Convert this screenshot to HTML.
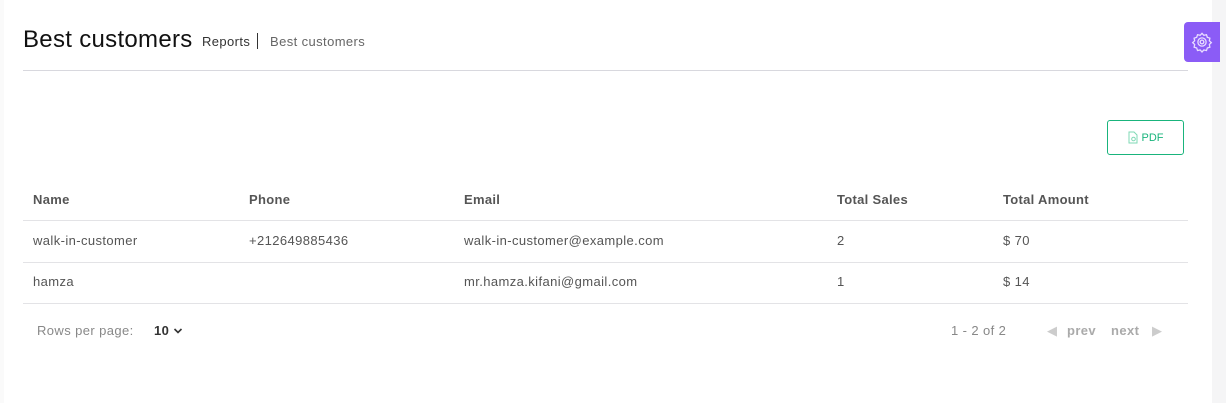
<!DOCTYPE html>
<html><head><meta charset="utf-8"><style>
*{margin:0;padding:0;box-sizing:border-box}
body{width:1226px;height:403px;background:#fff;font-family:"Liberation Sans",sans-serif;position:relative;overflow:hidden;color:#444}
.strip{position:absolute;right:0;top:0;width:14px;height:403px;background:#f5f5f6}
.lb{position:absolute;left:0;top:0;width:4px;height:403px;background:#fafafa}
h1{position:absolute;left:23px;top:26px;font-size:24px;font-weight:normal;color:#111;letter-spacing:0.3px}
.bc{position:absolute;top:34px;font-size:13px;letter-spacing:0.4px}
.hr{position:absolute;left:23px;top:70px;width:1165px;height:1px;background:#d8d8de}
.gear{position:absolute;left:1184px;top:22px;width:36px;height:40px;background:#8b5cf6;border-radius:4px 0 0 4px;display:flex;align-items:center;justify-content:center}
.pdf{position:absolute;left:1107px;top:120px;width:77px;height:35px;border:1px solid #19b47c;border-radius:3px;color:#19b47c;font-size:11px;display:flex;align-items:center;justify-content:center;gap:4px}
.row{position:absolute;left:23px;width:1165px;height:1px;background:#e3e3e6}
.c{position:absolute;font-size:13px;color:#555;letter-spacing:0.4px}
.th{font-weight:bold;color:#555;letter-spacing:0.3px}
.pg{position:absolute;top:323px;font-size:13px;color:#999;letter-spacing:0.4px}
</style></head><body>
<div class="lb"></div><div class="strip"></div>
<h1>Best customers</h1>
<div class="bc" style="left:202px;color:#333">Reports</div>
<div style="position:absolute;left:257px;top:33px;width:1px;height:16px;background:#333"></div>
<div class="bc" style="left:270px;color:#666">Best customers</div>
<div class="hr"></div>
<div class="gear"><svg width="22" height="22" viewBox="0 0 24 24" fill="none" stroke="#e9ddff" stroke-width="1.4"><path d="M12 2.5l2 2.2 2.9-.6.9 2.8 2.8.9-.6 2.9 2.2 2-2.2 2 .6 2.9-2.8.9-.9 2.8-2.9-.6-2 2.2-2-2.2-2.9.6-.9-2.8-2.8-.9.6-2.9-2.2-2 2.2-2-.6-2.9 2.8-.9.9-2.8 2.9.6z"/><circle cx="12" cy="12" r="4.5"/><circle cx="12" cy="12" r="2"/></svg></div>
<div class="pdf"><svg width="10" height="13" viewBox="0 0 10 13" fill="none" stroke="#7fd9b5" stroke-width="1"><path d="M1 1h5l3 3v8H1z"/><circle cx="5.5" cy="8" r="1.8"/></svg>PDF</div>
<div class="c th" style="left:33px;top:192px">Name</div>
<div class="c th" style="left:249px;top:192px">Phone</div>
<div class="c th" style="left:464px;top:192px">Email</div>
<div class="c th" style="left:837px;top:192px">Total Sales</div>
<div class="c th" style="left:1003px;top:192px">Total Amount</div>
<div class="row" style="top:220px"></div>
<div class="c" style="left:33px;top:233px">walk-in-customer</div>
<div class="c" style="left:249px;top:233px">+212649885436</div>
<div class="c" style="left:464px;top:233px">walk-in-customer@example.com</div>
<div class="c" style="left:837px;top:233px">2</div>
<div class="c" style="left:1003px;top:233px">$ 70</div>
<div class="row" style="top:262px"></div>
<div class="c" style="left:33px;top:274px">hamza</div>
<div class="c" style="left:464px;top:274px">mr.hamza.kifani@gmail.com</div>
<div class="c" style="left:837px;top:274px">1</div>
<div class="c" style="left:1003px;top:274px">$ 14</div>
<div class="row" style="top:303px"></div>
<div class="pg" style="left:37px;color:#888">Rows per page:</div>
<div class="pg" style="left:154px;color:#333;font-weight:bold">10 <svg width="10" height="8" viewBox="0 0 10 8"><path d="M1.5 2l3.5 3.5L8.5 2" stroke="#333" stroke-width="1.6" fill="none"/></svg></div>
<div class="pg" style="left:951px;color:#888">1 - 2 of 2</div>
<div class="pg" style="left:1047px;color:#ccc">&#9664;</div>
<div class="pg" style="left:1067px;font-weight:bold;color:#aaa">prev</div>
<div class="pg" style="left:1111px;font-weight:bold;color:#aaa">next</div>
<div class="pg" style="left:1152px;color:#ccc">&#9654;</div>
</body></html>
